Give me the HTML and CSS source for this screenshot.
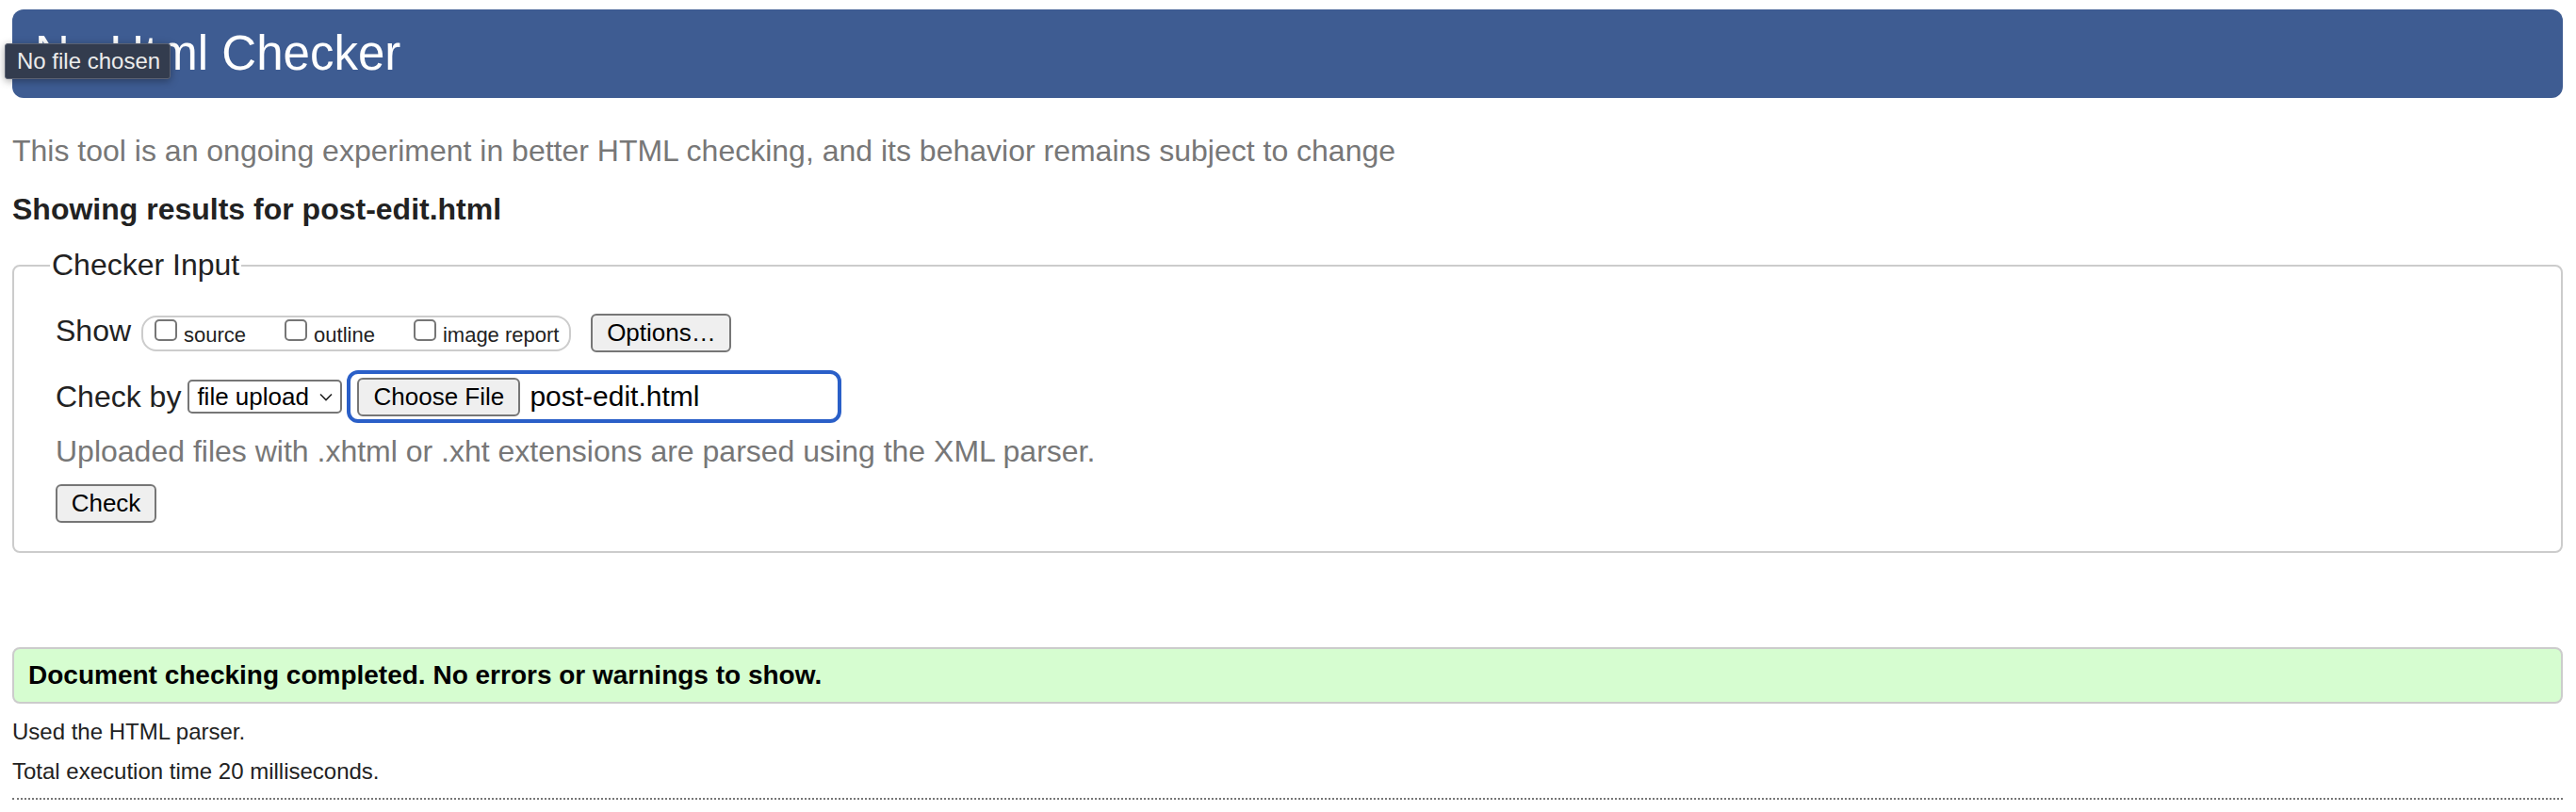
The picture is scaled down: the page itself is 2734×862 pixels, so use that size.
FILE: index.html
```html
<!DOCTYPE html>
<html lang="en">
<head>
<meta charset="utf-8">
<title>Nu Html Checker</title>
<link rel="stylesheet" href="styles.css">
</head>
<body>
<h1 class="title">Nu Html Checker</h1>
<div class="tooltip">No file chosen</div>
<p class="intro">This tool is an ongoing experiment in better HTML checking, and its behavior remains subject to change</p>
<p class="showing">Showing results for post-edit.html</p>
<fieldset class="checker">
  <legend class="legend">Checker Input</legend>
  <div class="row row-show">
    <span class="label label-show">Show</span>
    <div class="group">
      <label class="opt"><span class="box"></span><span class="opt-text">source</span></label>
      <label class="opt"><span class="box"></span><span class="opt-text">outline</span></label>
      <label class="opt last"><span class="box"></span><span class="opt-text">image report</span></label>
    </div>
    <span class="btn btn-options">Options…</span>
  </div>
  <div class="row row-check">
    <span class="label">Check by</span>
    <span class="select">file upload<svg class="chev" width="14" height="9" viewBox="0 0 14 9"><path d="M1 1.5 L7 7.5 L13 1.5" fill="none" stroke="#222" stroke-width="1.6"/></svg></span>
    <span class="file-ring"><span class="btn btn-choose">Choose File</span><span class="filename">post-edit.html</span></span>
  </div>
  <p class="hint">Uploaded files with .xhtml or .xht extensions are parsed using the XML parser.</p>
  <span class="btn btn-check">Check</span>
</fieldset>
<div class="success">Document checking completed. No errors or warnings to show.</div>
<p class="meta">Used the HTML parser.</p>
<p class="meta meta2">Total execution time 20 milliseconds.</p>
<div class="rule"></div>
</body>
</html>
```
FILE: styles.css
```css
html, body {
  margin: 0;
  background: #ffffff;
}
body {
  padding: 10px 14px 0 13px;
  font-family: "Liberation Sans", Arial, Helvetica, sans-serif;
  color: #222;
  position: relative;
}
.title {
  margin: 0;
  height: 94px;
  line-height: 94px;
  padding-left: 24px;
  background: #3e5c92;
  color: #fff;
  font-size: 51px;
  font-weight: normal;
  border-radius: 12px;
}
.tooltip {
  position: absolute;
  left: 5px;
  top: 46px;
  width: 176px;
  height: 38px;
  box-sizing: border-box;
  background: #333c4e;
  border: 1px solid #5b6273;
  border-radius: 3px;
  box-shadow: 0 2px 8px rgba(0,0,0,0.35);
  color: #ececec;
  font-size: 24px;
  line-height: 36px;
  padding-left: 12px;
}
.intro {
  margin: 38px 0 0;
  font-size: 32px;
  color: #777;
}
.showing {
  margin: 25px 0 0;
  font-size: 32px;
  font-weight: bold;
  color: #222;
}
.checker {
  margin: 22px 0 0;
  border: 2px solid #cccccc;
  border-radius: 8px;
  padding: 30px 44px 30px;
}
.legend {
  font-size: 32px;
  padding: 0 2px;
  margin-left: -6px;
  color: #222;
}
.row {
  display: flex;
  align-items: center;
}
.row-show {
  height: 48px;
}
.row-check {
  margin-top: 12px;
  height: 62px;
}
.label {
  font-size: 32px;
  color: #222;
}
.label-show {
  margin-bottom: 6px;
}
.group {
  display: flex;
  align-items: flex-start;
  margin-left: 11px;
  height: 38px;
  box-sizing: border-box;
  border: 2px solid #cccccc;
  border-radius: 16px;
  padding: 1px 11px 0 12px;
}
.opt {
  display: flex;
  align-items: flex-start;
  margin-right: 41px;
}
.opt.last {
  margin-right: 0;
}
.box {
  width: 24px;
  height: 23px;
  box-sizing: border-box;
  border: 2px solid #767676;
  border-radius: 5px;
  background: #fff;
  margin-top: 1px;
}
.opt-text {
  font-size: 22px;
  margin-left: 7px;
  margin-top: 5px;
  line-height: 26px;
  color: #222;
}
.btn {
  display: inline-flex;
  align-items: center;
  justify-content: center;
  box-sizing: border-box;
  background: #efefef;
  border: 2px solid #767676;
  border-radius: 6px;
  font-size: 26px;
  color: #000;
  height: 41px;
}
.btn-options {
  margin-left: 21px;
  width: 149px;
  margin-bottom: 2px;
}
.select {
  display: inline-flex;
  align-items: center;
  box-sizing: border-box;
  margin-left: 7px;
  width: 164px;
  height: 36px;
  border: 2px solid #767676;
  border-radius: 5px;
  background: #fff;
  font-size: 26px;
  color: #000;
  padding-left: 8px;
}
.chev {
  margin-left: 11px;
}
.file-ring {
  display: inline-flex;
  align-items: center;
  box-sizing: border-box;
  margin-left: 5px;
  width: 525px;
  height: 56px;
  border: 4px solid #2a5fc8;
  border-radius: 12px;
  padding-left: 7px;
}
.btn-choose {
  width: 173px;
}
.filename {
  margin-left: 10px;
  font-size: 30px;
  color: #000;
}
.hint {
  margin: 9px 0 0;
  font-size: 32px;
  color: #777;
}
.btn-check {
  margin-top: 16px;
  width: 107px;
}
.success {
  margin-top: 100px;
  height: 60px;
  box-sizing: border-box;
  border: 2px solid #cccccc;
  border-radius: 8px;
  background: #d6fdd0;
  font-size: 28px;
  font-weight: bold;
  color: #000;
  padding-left: 15px;
  line-height: 56px;
}
.meta {
  margin: 16px 0 0;
  font-size: 24px;
  color: #222;
}
.meta2 {
  margin-top: 14px;
}
.rule {
  margin-top: 14px;
  border-top: 2px dotted #777;
}
```
